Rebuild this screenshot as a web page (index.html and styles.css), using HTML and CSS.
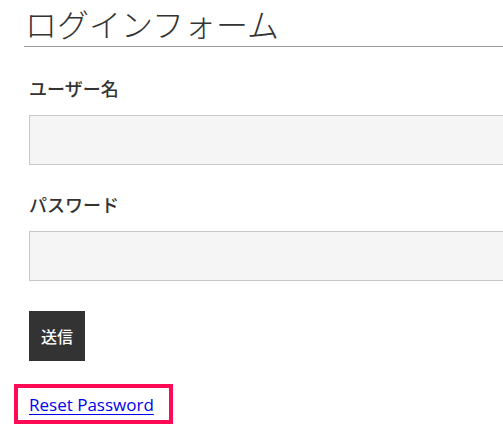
FILE: index.html
```html
<!DOCTYPE html>
<html lang="ja">
<head>
<meta charset="utf-8">
<title>ログインフォーム</title>
<link rel="stylesheet" href="styles.css">
</head>
<body>
<main class="page">
  <h1 class="title">ログインフォーム</h1>
  <form class="login-form">
    <div class="field">
      <label class="field-label" for="user">ユーザー名</label>
      <input class="field-input" id="user" type="text">
    </div>
    <div class="field">
      <label class="field-label" for="pass">パスワード</label>
      <input class="field-input" id="pass" type="password">
    </div>
    <button class="submit" type="submit">送信</button>
    <div class="reset-box"><a class="reset-link" href="#">Reset Password</a></div>
  </form>
</main>
</body>
</html>
```
FILE: styles.css
```css
html, body {
  margin: 0;
  padding: 0;
  background: #fff;
}
.page {
  padding-left: 24px;
  font-family: "Noto Sans CJK JP", "Noto Sans", sans-serif;
  color: #333;
}
.title {
  margin: 0;
  padding-left: 1px;
  font-size: 32px;
  font-weight: 300;
  line-height: 46px;
  height: 46px;
  border-bottom: 1px solid #999;
  color: #333;
}
.login-form {
  display: flex;
  flex-direction: column;
  align-items: flex-start;
  padding-left: 5px;
  padding-top: 28px;
}
.field {
  display: flex;
  flex-direction: column;
  width: 100%;
  margin-bottom: 26px;
}
.field-label {
  font-size: 18px;
  font-weight: 500;
  line-height: 26px;
  margin-bottom: 14px;
  color: #333;
}
.field-input {
  box-sizing: border-box;
  width: 100%;
  height: 50px;
  margin: 0;
  border: 1px solid #c8c8c8;
  border-right-width: 0;
  background: #f5f5f5;
  font-size: 16px;
}
.submit {
  margin: 4px 0 0;
  width: 56px;
  height: 50px;
  border: none;
  background: #333;
  color: #fff;
  font-family: "Noto Sans CJK JP", sans-serif;
  font-size: 16px;
  font-weight: 500;
  padding: 0;
}
.reset-box {
  margin: 23px 0 0 -15px;
  box-sizing: border-box;
  width: 159px;
  height: 40px;
  border: 4px solid #ff0a55;
  padding-left: 11px;
  display: flex;
  align-items: center;
}
.reset-link {
  font-family: "Open Sans", sans-serif;
  font-size: 17px;
  color: #0000ee;
  text-decoration: underline;
  text-underline-offset: 3px;
}
```
